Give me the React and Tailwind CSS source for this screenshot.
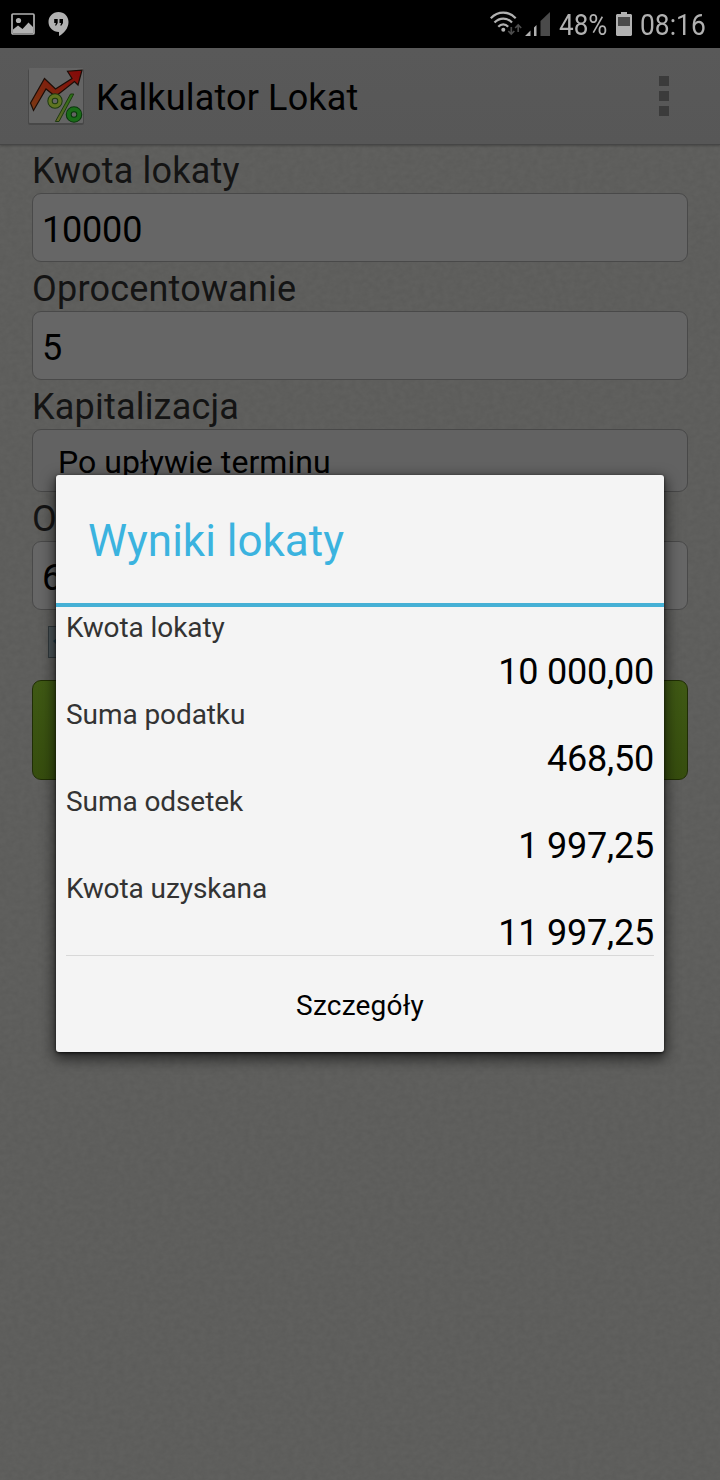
import React from 'react'

const results = [
  { label: 'Kwota lokaty',   value: '10 000,00' },
  { label: 'Suma podatku',   value: '468,50' },
  { label: 'Suma odsetek',   value: '1 997,25' },
  { label: 'Kwota uzyskana', value: '11 997,25' },
]

function StatusBar() {
  return (
    <div className="h-12 bg-black flex items-center text-[#b1b1b1]">
      <svg className="ml-[11px]" width="24" height="22" viewBox="0 0 24 22">
        <rect x="1" y="1" width="22" height="20" rx="1" fill="none" stroke="currentColor" strokeWidth="1.700" />
        <circle cx="7.500" cy="7.500" r="2.600" fill="currentColor" />
        <path d="M2 16.500l5-4 4.500 3.500 6-6.500 4.500 4.500v6H2z" fill="currentColor" />
      </svg>
      <svg className="ml-[13px]" width="21" height="24" viewBox="0 0 21 24">
        <path d="M10.500 0C4.700 0 .5 4.500 .5 10S5 20 11 20v4c5-2.500 9.500-8 9.500-14S16 0 10.500 0z" fill="currentColor" />
        <path d="M6.200 7h3.500v4l-1.500 2.500H7L8 11H6.200zM11.500 7H15v4l-1.500 2.500h-1.300l1-2.500h-1.700z" fill="#000" />
      </svg>

      <svg className="ml-[421px]" width="32" height="26" viewBox="0 0 32 26" fill="none" stroke="currentColor" strokeWidth="2.200">
        <path d="M.8 7.200C8 -.3 18.500 -.3 25.700 7.200M4.500 11.500c5-5.300 12.500-5.300 17.500 0M8.300 15.700c2.800-3 7-3 9.900 0" />
        <circle cx="13.300" cy="18.700" r="2" fill="currentColor" stroke="none" />
        <path d="M21.300 16v7M18.300 20l3 3 3-3M28.200 21v-7M25.200 17l3-3 3 3" stroke="#4c4c4c" strokeWidth="1.700" />
      </svg>
      <svg className="ml-[3px]" width="25" height="24" viewBox="0 0 25 24">
        <path d="M0 24l5.500-5.500V24zM9 15.500l2.500-2.500v11H9z" fill="currentColor" />
        <path d="M15.500 9L25 0v24h-9.500z" fill="#4a4a4a" />
      </svg>
      <span className="ml-[9px] w-[49px] text-[30px] leading-12 origin-left scale-x-[.87] pt-0.5">48%</span>
      <svg className="ml-[8px]" width="16" height="24" viewBox="0 0 16 24">
        <path d="M5 0h6v2h4l1 1v20l-1 1H1l-1-1V3l1-1h4z" fill="currentColor" />
        <path d="M2 5h12v9H2z" fill="#4a4a4a" />
      </svg>
      <span className="ml-[8px] text-[30px] leading-12 origin-left scale-x-[.88] pt-0.5">08:16</span>
    </div>
  )
}

function AppLogo() {
  return (
    <svg className="ml-7" width="56" height="57" viewBox="0 0 56 57">
      <defs>
        <linearGradient id="arrow" x1="0" y1="1" x2="1" y2="0">
          <stop offset="0" stopColor="#7a3a14" />
          <stop offset="1" stopColor="#850808" />
        </linearGradient>
        <linearGradient id="slash" x1="1" y1="0" x2="0" y2="1">
          <stop offset="0" stopColor="#247315" />
          <stop offset="1" stopColor="#6b6529" />
        </linearGradient>
      </defs>
      <rect x="0" y="1" width="56" height="56" rx="2" fill="#484848" />
      <rect x="1" y="0" width="54" height="55" rx="1" fill="#646464" />
      <path d="M2.500 35L16.500 10.500l11 10.500L44 10.500l-4.500-7.300L54 2.200 50 17l-3.500-3.500-19 15-9.500-7.500L5.500 42.500z" fill="url(#arrow)" stroke="#1c0d07" strokeWidth="1.200" />
      <path d="M42.500 26h3.300L31 53.500h-3.600z" fill="url(#slash)" stroke="#1d3a10" strokeWidth="1" />
      <circle cx="27" cy="33" r="5" fill="none" stroke="#1d3a10" strokeWidth="5.400" />
      <circle cx="27" cy="33" r="5" fill="none" stroke="#5f7321" strokeWidth="3.400" />
      <circle cx="46" cy="46.500" r="5.300" fill="none" stroke="#0a360c" strokeWidth="6" />
      <circle cx="46" cy="46.500" r="5.300" fill="none" stroke="#1a6c18" strokeWidth="4" />
    </svg>
  )
}

function Header() {
  return (
    <header className="relative h-[97px] flex items-center bg-gradient-to-b from-[#595959] to-[#575757] border-b border-[#464646] shadow-[0_1px_2px_rgba(0,0,0,.25)]">
      <AppLogo />
      <h1 className="ml-3 text-[36px] leading-[42px] tracking-[.15px] text-black pt-1">Kalkulator Lokat</h1>
      <div className="ml-auto mr-[51px] flex flex-col gap-[5px]">
        <span className="size-2.5 bg-[#3b3b3b]" />
        <span className="size-2.5 bg-[#3b3b3b]" />
        <span className="size-2.5 bg-[#3b3b3b]" />
      </div>
    </header>
  )
}

function Field({ label, value }) {
  return (
    <label className="block">
      <span className="block h-[49px] pt-1.5 text-[36px] leading-[42px] tracking-[.2px] text-[#141414]">{label}</span>
      <span className="flex items-center h-[69px] rounded-[9px] border border-[#494949] bg-[#666] pl-[9px] pt-1 text-[36px] tracking-[-.2px] text-black">
        {value}
      </span>
    </label>
  )
}

function ResultDialog() {
  return (
    <div className="absolute left-14 top-[475px] w-[608px] h-[577px] flex flex-col rounded-[3px] bg-[#f4f4f4] shadow-[0_5px_14px_2px_rgba(0,0,0,.6),0_1px_3px_rgba(0,0,0,.7)]">
      <h2 className="h-32 shrink-0 flex items-center pl-8 pt-1 text-[44px] text-[#3bb3df]">Wyniki lokaty</h2>
      <div className="h-1 shrink-0 bg-[#45b0d5]" />
      <dl className="mx-2.5 h-[349px] shrink-0 border-b border-[#d8d8d8]">
        {results.map(({ label, value }) => (
          <div key={label} className="h-[87px]">
            <dt className="h-11 pt-1 text-[28px] leading-[33px] tracking-[-.08px] text-[#333]">{label}</dt>
            <dd className="text-[36px] leading-[42px] tracking-[-.2px] text-right text-black">{value}</dd>
          </div>
        ))}
      </dl>
      <button className="flex-1 pt-1 text-[28px] tracking-[.2px] text-black">Szczegóły</button>
    </div>
  )
}

export default function App() {
  return (
    <div className="relative w-[720px] h-[1480px] overflow-hidden bg-[#60605e] font-[Roboto,sans-serif]">
      {/* Paper grain */}
      <svg className="absolute inset-0" width="720" height="1480">
        <filter id="grain">
          <feTurbulence type="fractalNoise" baseFrequency=".16 .2" numOctaves="3" seed="4" />
          <feColorMatrix values="0 0 0 0 0  0 0 0 0 0  0 0 0 0 0  .08 0 0 0 -.02" />
        </filter>
        <rect width="720" height="1480" filter="url(#grain)" />
      </svg>

      <div className="relative">
        <StatusBar />
        <Header />
        <main className="px-8 flex flex-col">
          <div className="-mt-px">
            <Field label="Kwota lokaty" value="10000" />
          </div>
          <Field label="Oprocentowanie" value="5" />
          <div>
            <span className="block h-[49px] pt-1.5 text-[36px] leading-[42px] tracking-[.2px] text-[#141414]">Kapitalizacja</span>
            <span className="flex items-center h-[63px] rounded-[9px] border border-[#484848] bg-[#626262] pl-[25px] pt-0.5 text-[32px] tracking-[.05px] text-black">
              Po upływie terminu
            </span>
          </div>
          <Field label="O" value="6" />
          <div className="mt-4 ml-4 size-8 border border-[#30383c] bg-[#4c5559]">
            <svg width="30" height="30" viewBox="0 0 30 30">
              <path d="M4 14l4-3v7z" fill="#203b49" />
            </svg>
          </div>
          <div className="mt-[22px] h-[100px] rounded-[9px] border border-[#202e05] bg-gradient-to-b from-[#3f5914] to-[#364d0e]" />
        </main>
      </div>

      <ResultDialog />
    </div>
  )
}
